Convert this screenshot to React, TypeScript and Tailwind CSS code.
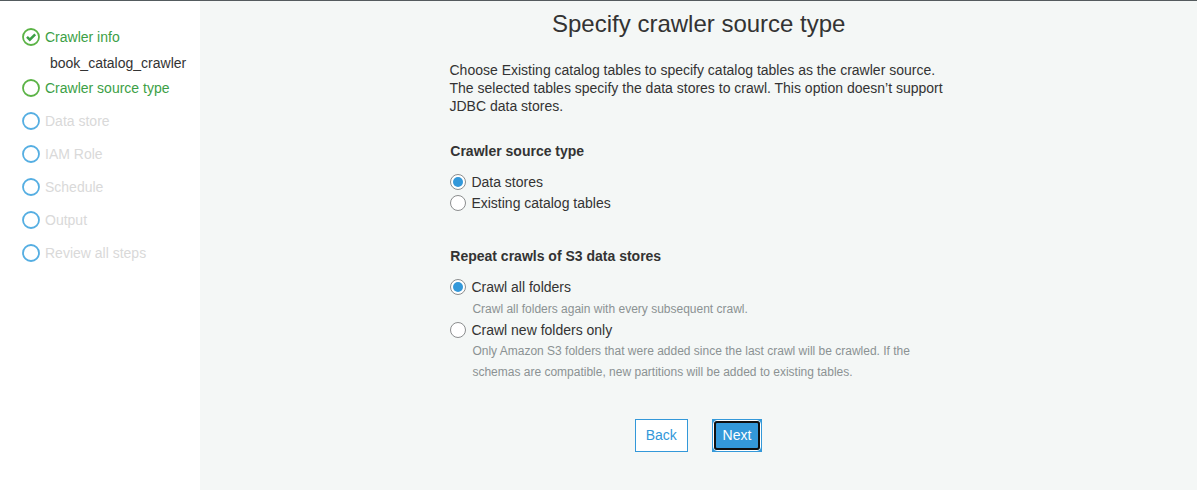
import React from "react";

const done = "text-[#3c9f46]";

function Ring({ color, check }: { color: string; check?: boolean }) {
  return (
    <svg width="18" height="18" viewBox="0 0 18 18" fill="none" className="mr-[5px] shrink-0">
      <circle cx="9" cy="9" r="8" stroke={color} strokeWidth="1.8" fill="#fff" />
      {check && <path d="M5 8.9l2.8 2.8 5.4-5.4" stroke="#3c9f46" strokeWidth="2.5" />}
    </svg>
  );
}

function Radio({ label, checked }: { label: string; checked?: boolean }) {
  return (
    <label className="flex h-[21px] items-center">
      <svg width="16" height="16" viewBox="0 0 16 16" className="mr-[5.4px]">
        <circle cx="8" cy="8" r="7.5" fill="#fff" stroke="#8b8d8e" />
        {checked && <circle cx="8" cy="8" r="5" fill="#3398d9" />}
      </svg>
      <span>{label}</span>
    </label>
  );
}

const pending = ["Data store", "IAM Role", "Schedule", "Output", "Review all steps"];

export default function App() {
  return (
    <div className="flex h-[490px] w-[1197px] border-t border-[#545b5e] bg-white font-['Liberation_Sans',Arial,sans-serif] text-[14px] leading-[18px] text-[#333]">
      <aside className="w-[200px] shrink-0 pl-[22px] pt-[27px]">
        <div className={"flex items-center " + done}><Ring color="#5bb346" check />Crawler info</div>
        <div className="mt-2 pl-7">book_catalog_crawler</div>
        <div className={"mt-[7px] flex items-center " + done}><Ring color="#5bb346" />Crawler source type</div>
        {pending.map((t) => (
          <div key={t} className="mt-[15px] flex items-center text-[#d9d9d9]"><Ring color="#55aee2" />{t}</div>
        ))}
      </aside>
      <main className="h-[489px] flex-1 bg-[#f4f7f6] pl-[250px]">
        <h1 className="w-[497.5px] pt-[9px] text-center text-[24px] leading-[28px]">Specify crawler source type</h1>
        <p className="-ml-[0.5px] mt-[23px] w-[497px]">
          Choose Existing catalog tables to specify catalog tables as the crawler source. The selected tables specify the data stores to crawl. This option doesn’t support JDBC data stores.
        </p>
        <h2 className="mt-[27px] pl-[0.3px] font-bold">Crawler source type</h2>
        <div className="mt-[11px]">
          <Radio label="Data stores" checked />
          <Radio label="Existing catalog tables" />
        </div>
        <h2 className="mt-[34px] pl-[0.3px] font-bold">Repeat crawls of S3 data stores</h2>
        <div className="mt-[11px]">
          <Radio label="Crawl all folders" checked />
          <p className="h-[22px] pl-[22.4px] pt-[2px] text-[12px] leading-[21px] text-[#8b9293]">Crawl all folders again with every subsequent crawl.</p>
          <Radio label="Crawl new folders only" />
          <p className="w-[480px] pl-[22.4px] pt-px text-[12px] leading-[21px] text-[#8b9293]">Only Amazon S3 folders that were added since the last crawl will be crawled. If the<br />schemas are compatible, new partitions will be added to existing tables.</p>
        </div>
        <div className="mt-[36px] flex pl-[185px]">
          <button className="h-[33px] w-[53px] border border-[#3398d9] bg-white pb-px pr-[0.5px] text-[#3398d9]">Back</button>
          <button className="ml-6 flex h-[33px] w-[50px] bg-[#3398d9] p-px text-white">
            <span className="flex flex-1 self-stretch rounded-[4px] border border-white">
              <span className="flex flex-1 items-center justify-center rounded-[3px] border-2 border-[#101010] bg-[#3398d9] pb-px">Next</span>
            </span>
          </button>
        </div>
      </main>
    </div>
  );
}
